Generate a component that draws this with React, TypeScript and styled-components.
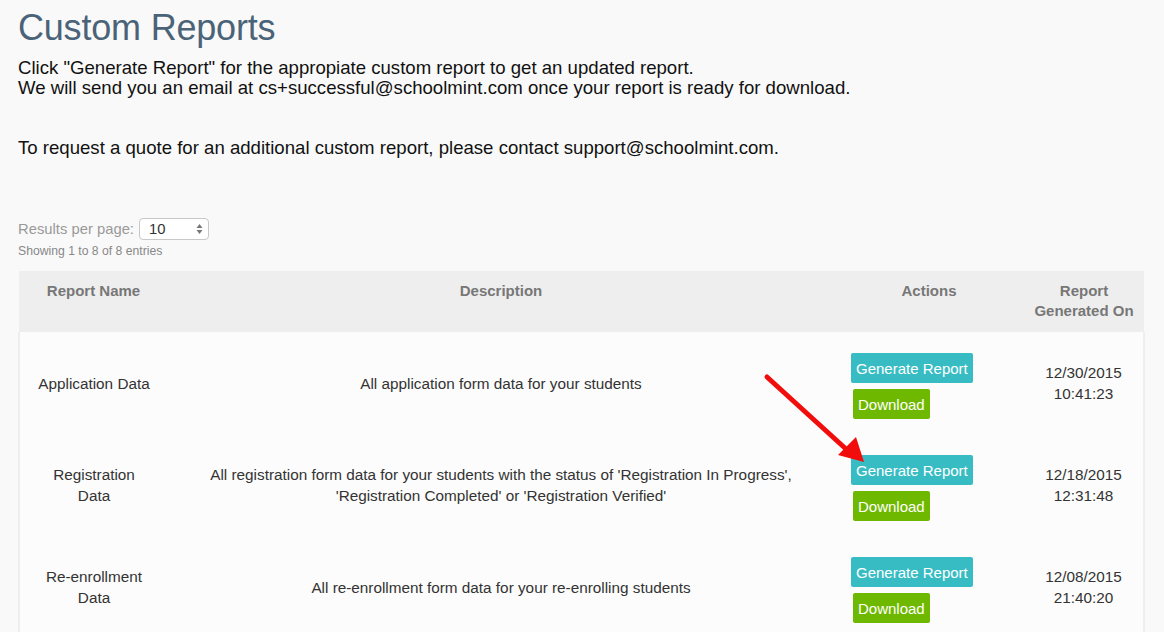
import React from "react";
import styled, { createGlobalStyle } from "styled-components";

const Global = createGlobalStyle`
html,body{margin:0;padding:0;background:#f9f9f9;}
body{font-family:"Liberation Sans",Arial,Helvetica,sans-serif;color:#222;}
`
const Page = styled.div`
position:relative;
padding:6px 20px 0 18px;
width:1164px;
height:632px;
box-sizing:border-box;
overflow:hidden;
`
const Title = styled.h1`
margin:0;
font-size:36px;
font-weight:400;
line-height:44px;
color:#4a6378;
letter-spacing:-0.2px;
`
const Intro = styled.p`
margin:8px 0 0;
font-size:18.6px;
line-height:20px;
color:#111;
`
const Contact = styled.p`
margin:40px 0 0;
font-size:18.6px;
line-height:20px;
color:#111;
`
const PerPage = styled.div`
margin-top:60px;
display:flex;
align-items:center;
gap:5px;
font-size:14.8px;
color:#999;
height:22px;
`
const SelectBox = styled.div`
display:flex;
align-items:center;
justify-content:space-between;
width:70px;
height:22px;
box-sizing:border-box;
border:1px solid #c8c8c8;
border-radius:4px;
background:#fff;
padding:0 5px 0 9px;
font-size:14.8px;
color:#333;
`
const Showing = styled.div`
margin-top:4px;
font-size:12.2px;
color:#888;
line-height:14px;
`
const Table = styled.table`
margin-top:13px;
width:1125px;
border-collapse:collapse;
table-layout:fixed;
`
const Th = styled.th<{w:number}>`
box-sizing:border-box;
width:${p=>p.w}px;
background:#eeeeee;
color:#777;
font-size:15px;
font-weight:700;
line-height:20px;
padding:10px 2px 11px;
height:61px;
vertical-align:top;
text-align:center;
white-space:nowrap;
`
const Row = styled.tr`
background:#fcfcfc;
`
const Td = styled.td<{edge?:"left"|"right"}>`
font-size:15.3px;
line-height:21px;
color:#333;
text-align:center;
vertical-align:middle;
padding:0 4px;
${p=>p.edge==="left"?"border-left:2px solid #eee;":""}
${p=>p.edge==="right"?"border-right:2px solid #eee;":""}
`
const ActionCell = styled.td`
text-align:left;
vertical-align:top;
padding:21px 0 15px 17px;
`
const Btn = styled.div<{kind:"gen"|"dl"}>`
display:inline-flex;
align-items:center;
height:30px;
padding:0 5px;
font-size:15px;
color:#fff;
border-radius:2px;
background:${p=>p.kind==="gen"?"#38bcc3":"#6fb800"};
margin-left:${p=>p.kind==="dl"?"2px":"0"};
margin-top:${p=>p.kind==="dl"?"6px":"0"};
`
const BtnStack = styled.div`
display:flex;
flex-direction:column;
align-items:flex-start;
`
const Arrow = styled.svg`
position:absolute;
left:0;
top:0;
pointer-events:none;
`

const rows = [
  {name:["Application Data"],desc:["All application form data for your students"],date:"12/30/2015",time:"10:41:23"},
  {name:["Registration","Data"],desc:["All registration form data for your students with the status of 'Registration In Progress',","'Registration Completed' or 'Registration Verified'"],date:"12/18/2015",time:"12:31:48"},
  {name:["Re-enrollment","Data"],desc:["All re-enrollment form data for your re-enrolling students"],date:"12/08/2015",time:"21:40:20"},
]

const Lines = ({items}:{items:string[]}) => (
  <>{items.map((d,j)=><React.Fragment key={j}>{d}{j<items.length-1&&<br/>}</React.Fragment>)}</>
)

export default function App(){
  return (
    <>
      <Global/>
      <Page>
        <Title>Custom Reports</Title>
        <Intro>
          Click "Generate Report" for the appropiate custom report to get an updated report.<br/>
          We will send you an email at cs+successful@schoolmint.com once your report is ready for download.
        </Intro>
        <Contact>To request a quote for an additional custom report, please contact support@schoolmint.com.</Contact>
        <PerPage>
          Results per page:
          <SelectBox>
            <span>10</span>
            <svg width="7" height="12" viewBox="0 0 7 12"><path d="M3.5 1 L6.5 5 H0.5Z M3.5 11 L6.5 7 H0.5Z" fill="#777"/></svg>
          </SelectBox>
        </PerPage>
        <Showing>Showing 1 to 8 of 8 entries</Showing>
        <Table>
          <thead>
            <tr>
              <Th w={149}>Report Name</Th>
              <Th w={666}>Description</Th>
              <Th w={190}>Actions</Th>
              <Th w={120}>Report<br/>Generated On</Th>
            </tr>
          </thead>
          <tbody>
            {rows.map((r,i)=>(
              <Row key={i}>
                <Td edge="left"><Lines items={r.name}/></Td>
                <Td><Lines items={r.desc}/></Td>
                <ActionCell>
                  <BtnStack>
                    <Btn kind="gen">Generate Report</Btn>
                    <Btn kind="dl">Download</Btn>
                  </BtnStack>
                </ActionCell>
                <Td edge="right">{r.date}<br/>{r.time}</Td>
              </Row>
            ))}
          </tbody>
        </Table>
        <Arrow width="1164" height="632">
          <line x1="767" y1="377" x2="846" y2="449" stroke="#f20d0d" strokeWidth="5" strokeLinecap="round"/>
          <polygon points="838,455 856,437 864,462" fill="#f20d0d"/>
        </Arrow>
      </Page>
    </>
  )
}
